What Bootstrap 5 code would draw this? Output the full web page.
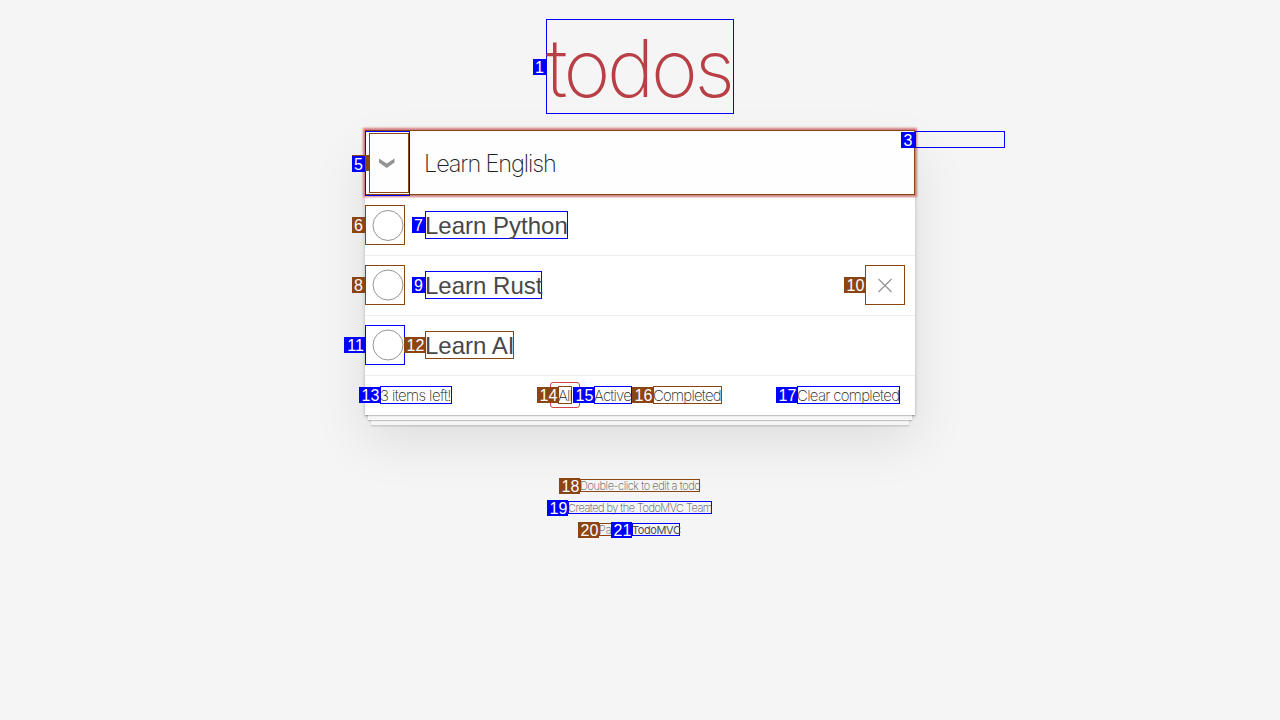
<!DOCTYPE html>
<html lang="en">
<head>
<meta charset="utf-8">
<meta name="viewport" content="width=device-width, initial-scale=1">
<title>TodoMVC</title>
<link href="https://cdn.jsdelivr.net/npm/bootstrap@5.3.0/dist/css/bootstrap.min.css" rel="stylesheet">
<style>
  body { background: #f5f5f5; color: #222; font-family: Inter, "Liberation Sans", sans-serif; font-weight: 200; overflow: hidden; }
  .app { width: 550px; }

  /* numbered outline around an interactive element */
  .hint { --c: #00f; position: relative; display: block; flex: none; box-shadow: inset 0 0 0 1px var(--c); white-space: nowrap; }
  .hint.brown { --c: #8b4513; }
  .hint > b { position: absolute; right: 100%; top: calc(50% - 8px); height: 16px; min-width: 13px; background: var(--c); color: #fff; text-align: center;
    font: 400 16px/17px "Liberation Sans", sans-serif; letter-spacing: 0; z-index: 3; }
  .hint > b.two { width: 21px; padding-left: 2px; }

  .title { width: 188px; height: 95px; margin-top: 19px; font-size: 80px; line-height: 98px; font-weight: 200; color: #b83f45; letter-spacing: -3.4px; }
  .todo-box { height: 285px; margin-top: 16px; background: #fff; box-shadow: 0 2px 4px rgba(0,0,0,.2), 0 25px 50px rgba(0,0,0,.1); }
  .new-todo { height: 65px; background: #fefefe; font-size: 23.5px; }
  .new-todo::before { content: ""; position: absolute; inset: 0; box-shadow: 0 0 2px 2px #cf7d7d; pointer-events: none; z-index: -1; }
  .new-todo span { margin: 3px 0 0 59px; letter-spacing: -1.1px; }
  .new-wrap { z-index: 1; }
  .toggle-label { position: absolute; left: 0; top: 1px; width: 45px; height: 65px; }
  .toggle-all { position: absolute; left: 4px; top: 3px; width: 40px; height: 60px; }
  .entry { height: 60px; border-bottom: 1px solid #ededed; padding-bottom: 1px; }
  .entry.first { height: 61px; }
  .check { width: 40px; height: 40px; }
  .check svg { position: absolute; left: 0; top: 0; overflow: visible; }
  .task { height: 28px; margin-left: 20px; font: 400 24px/30px "Liberation Sans", sans-serif; color: #484848; }
  .remove { width: 40px; height: 40px; margin-right: 10px; }
  .controls { height: 39px; padding: 0 15px 1px; font-size: 15px; position: relative; z-index: 1; }
  .controls .hint { height: 18px; line-height: 20px; }
  .picked { position: absolute; left: 185px; top: 6px; width: 30px; height: 26px; border: 1px solid #ce4646; border-radius: 3px; }
  .sheets { position: absolute; left: 0; right: 0; bottom: 0; height: 39px;
    box-shadow: 0 1px 1px rgba(0,0,0,.2), 0 8px 0 -3px #f6f6f6, 0 9px 1px -3px rgba(0,0,0,.2), 0 16px 0 -6px #f6f6f6, 0 17px 2px -6px rgba(0,0,0,.2); }
  .info { margin-top: 64px; font-size: 11px; color: #4d4d4d; }
  .info .hint { height: 13px; line-height: 15px; margin-bottom: 9px; }
</style>
</head>
<body>
<main class="app mx-auto d-flex flex-column align-items-center">
  <h1 class="title hint mb-0"><b>1</b>todos</h1>

  <section class="todo-box w-100 position-relative">
    <div class="sheets"></div>
    <div class="new-wrap position-relative">
      <div class="new-todo hint brown d-flex align-items-center"><b></b><span>Learn English</span></div>
      <div class="toggle-all hint brown"><b></b></div>
      <div class="toggle-label hint"><b>5</b>
        <svg width="45" height="65" viewBox="0 0 45 65"><path d="M14 27.5L21.700 32.5L29.500 27.5V31.5L21.700 37L14 31.5Z" fill="#949494"/></svg>
      </div>
      <div class="hint position-absolute start-100" style="top:1px;width:90px;height:17px"><b style="width:14px">3</b></div>
    </div>
    <ul class="list-unstyled mb-0 position-relative">
      <li class="entry first d-flex align-items-center">
        <div class="check hint brown"><b>6</b><svg width="40" height="40"><circle cx="23" cy="20.5" r="15" fill="none" stroke="#949494"/></svg></div>
        <label class="task hint" style="width:143px"><b>7</b>Learn Python</label>
      </li>
      <li class="entry d-flex align-items-center">
        <div class="check hint brown"><b>8</b><svg width="40" height="40"><circle cx="23" cy="20" r="15" fill="none" stroke="#949494"/></svg></div>
        <label class="task hint" style="width:117px"><b>9</b>Learn Rust</label>
        <div class="remove hint brown ms-auto"><b class="two">10</b><svg class="d-block" width="40" height="40"><path d="M13.500 14L26.500 27M26.500 14L13.500 27" stroke="#949494" stroke-width="1.2"/></svg></div>
      </li>
      <li class="entry d-flex align-items-center">
        <div class="check hint"><b class="two">11</b><svg width="40" height="40"><circle cx="23" cy="20" r="15" fill="none" stroke="#949494"/></svg></div>
        <label class="task hint brown" style="width:89px"><b class="two">12</b>Learn AI</label>
      </li>
    </ul>
    <footer class="controls d-flex align-items-center">
      <span class="picked"></span>
      <span class="hint" style="width:72px;letter-spacing:-.6px"><b class="two">13</b>3 items left!</span>
      <span class="hint brown" style="width:14px;margin-left:106px;letter-spacing:-.9px"><b class="two">14</b>All</span>
      <span class="hint" style="width:38px;margin-left:22px;letter-spacing:-.8px"><b class="two">15</b>Active</span>
      <span class="hint brown" style="width:69px;margin-left:21px;letter-spacing:-.8px"><b class="two">16</b>Completed</span>
      <span class="hint ms-auto" style="width:103px;letter-spacing:-.7px"><b class="two">17</b>Clear completed</span>
    </footer>
  </section>

  <footer class="info d-flex flex-column align-items-center">
    <p class="hint brown" style="width:120px;letter-spacing:-.42px"><b class="two">18</b>Double-click to edit a todo</p>
    <p class="hint" style="width:144px;letter-spacing:-.53px"><b class="two">19</b>Created by the TodoMVC Team</p>
    <div class="d-flex" style="margin-right:1px">
      <p class="hint brown" style="width:33px"><b class="two">20</b>Pa</p>
      <p class="hint" style="width:48px;font-weight:400;letter-spacing:-.4px"><b class="two">21</b>TodoMVC</p>
    </div>
  </footer>
</main>
<script src="https://cdn.jsdelivr.net/npm/bootstrap@5.3.0/dist/js/bootstrap.bundle.min.js"></script>
</body>
</html>
